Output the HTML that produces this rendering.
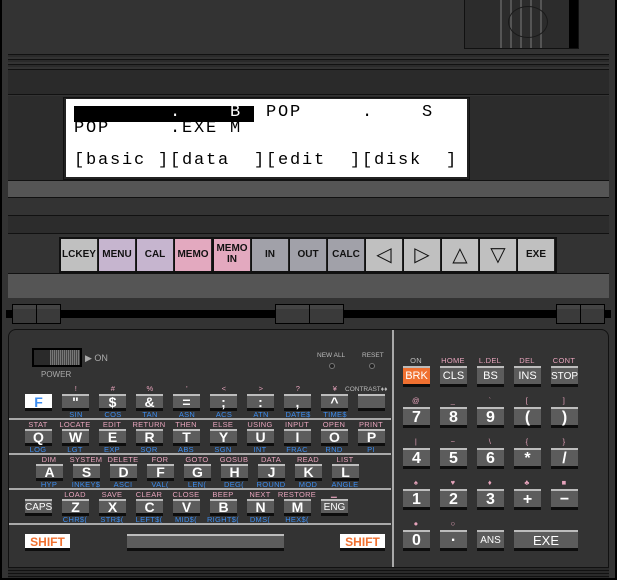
<!DOCTYPE html>
<html><head><meta charset="utf-8"><style>
*{margin:0;padding:0;box-sizing:border-box}
body{width:617px;height:580px;background:#fff;position:relative;overflow:hidden;font-family:"Liberation Sans",sans-serif}
.a{position:absolute}
.lid{left:0;top:0;width:617px;height:300px;background:#333;border:2px solid #000;border-top:none}
.base{left:0;top:298px;width:617px;height:282px;background:#333;border:2px solid #000;border-top:none;border-radius:0 0 0 0}
.in{left:8px;top:329px;width:601px;height:240px;background:#333;border:1px solid #111;border-radius:8px 8px 0 0}
.k{position:absolute;height:17px;width:27px;background:#5c5c5c;border-top:2px solid #bdbdbd;border-bottom:3px solid #0d0d0d;color:#fff;font-weight:bold;font-size:14px;line-height:13px;text-align:center}
.r .k{height:21px;font-size:16px;line-height:17px}
.p,.b{position:absolute;font-size:7.5px;width:40px;text-align:center;letter-spacing:.3px}
.p{color:#e6a3bb}.b{color:#3c8df0}
.sep{position:absolute;left:9px;width:382px;height:2px;background:#a9a9a9}
.fk{position:absolute;top:239px;height:32px;width:37px;font-size:10px;font-weight:bold;color:#111;text-align:center;line-height:32px;border-right:1px solid #222}
.lcd{font-family:"Liberation Mono",monospace;font-size:17px;letter-spacing:1.8px;position:absolute;left:74px;white-space:pre;color:#000;line-height:16px}
</style></head><body>
<div class="a lid"></div>
<!-- speaker -->
<div class="a" style="left:464px;top:0;width:115px;height:49px;background:#2c2c2c;border:1px solid #111;border-top:none"></div>
<div class="a" style="left:500px;top:0;width:2px;height:48px;background:#555"></div>
<div class="a" style="left:510px;top:0;width:2px;height:48px;background:#555"></div>
<div class="a" style="left:520px;top:0;width:2px;height:48px;background:#555"></div>
<div class="a" style="left:530px;top:0;width:2px;height:48px;background:#555"></div>
<div class="a" style="left:540px;top:0;width:2px;height:48px;background:#555"></div>
<div class="a" style="left:508px;top:6px;width:40px;height:32px;border:1px solid #1a1a1a;border-radius:50%"></div>
<div class="a" style="left:569px;top:0;width:9px;height:48px;background:#000"></div>
<!-- stripes -->
<div class="a" style="left:8px;top:52px;width:601px;height:19px;background:repeating-linear-gradient(#333 0 2px,#111 2px 3px,#2a2a2a 3px 5px)"></div>
<div class="a" style="left:8px;top:71px;width:601px;height:24px;background:#2a2a2a;border-bottom:1px solid #111"></div>
<div class="a" style="left:8px;top:96px;width:601px;height:84px;background:#2c2c2c"></div>
<div class="a" style="left:63px;top:97px;width:407px;height:83px;background:#222;border:1px solid #111"></div>
<div class="a" style="left:66px;top:99px;width:401px;height:78px;background:#fff"></div>
<div class="a" style="left:74px;top:106px;width:180px;height:16px;background:#000"></div>
<div class="lcd" style="top:105px;color:#fff">        .    B</div>
<div class="lcd" style="top:105px">                POP     .    S</div>
<div class="lcd" style="top:121px">POP     .EXE M</div>
<div class="lcd" style="top:153px">[basic ][data  ][edit  ][disk  ]</div>
<div class="a" style="left:8px;top:180px;width:601px;height:18px;background:#555;border-top:1px solid #111;border-bottom:1px solid #111"></div>
<div class="a" style="left:8px;top:198px;width:601px;height:18px;background:#333;border-bottom:1px solid #111"></div>
<div class="a" style="left:8px;top:216px;width:601px;height:18px;background:#2c2c2c;border-bottom:1px solid #111"></div>
<div class="a" style="left:8px;top:234px;width:601px;height:39px;background:#333"></div>
<div class="a" style="left:59px;top:237px;width:498px;height:36px;background:#111"></div>
<div class="fk" style="left:61px;background:#c0c0c0">LCKEY</div>
<div class="fk" style="left:99px;background:#c6b5cf">MENU</div>
<div class="fk" style="left:137px;background:#c6b5cf">CAL</div>
<div class="fk" style="left:175px;background:#e3a9bf">MEMO</div>
<div class="fk" style="left:214px;background:#e3a9bf;line-height:11px;padding-top:4px">MEMO<br>IN</div>
<div class="fk" style="left:252px;background:#a1a1a9">IN</div>
<div class="fk" style="left:290px;background:#a1a1a9">OUT</div>
<div class="fk" style="left:328px;background:#a1a1a9">CALC</div>
<div class="fk" style="left:366px;background:#c0c0c0;font-size:20px;font-weight:normal">◁</div>
<div class="fk" style="left:404px;background:#c0c0c0;font-size:20px;font-weight:normal">▷</div>
<div class="fk" style="left:442px;background:#c0c0c0;font-size:20px;font-weight:normal">△</div>
<div class="fk" style="left:480px;background:#c0c0c0;font-size:20px;font-weight:normal">▽</div>
<div class="fk" style="left:518px;background:#c0c0c0">EXE</div>
<div class="a" style="left:8px;top:273px;width:601px;height:26px;background:#555;border-top:1px solid #111;border-bottom:1px solid #111"></div>
<!-- base -->
<div class="a base"></div>
<div class="a" style="left:6px;top:310px;width:605px;height:8px;background:#000"></div>
<div class="a" style="left:12px;top:304px;width:49px;height:20px;background:#3a3a3a;border:1px solid #000;box-shadow:inset 0 4px #444"></div>
<div class="a" style="left:36px;top:304px;width:1px;height:20px;background:#000"></div>
<div class="a" style="left:275px;top:304px;width:69px;height:20px;background:#3a3a3a;border:1px solid #000;box-shadow:inset 0 4px #444"></div>
<div class="a" style="left:309px;top:304px;width:1px;height:20px;background:#000"></div>
<div class="a" style="left:556px;top:304px;width:49px;height:20px;background:#3a3a3a;border:1px solid #000;box-shadow:inset 0 4px #444"></div>
<div class="a" style="left:580px;top:304px;width:1px;height:20px;background:#000"></div>
<div class="a in"></div>
<div class="a" style="left:392px;top:330px;width:2px;height:238px;background:#a9a9a9"></div>
<div class="a" style="left:8px;top:567px;width:601px;height:11px;background:repeating-linear-gradient(#111 0 1px,#2a2a2a 1px 3px)"></div>
<!-- power -->
<div class="a" style="left:32px;top:348px;width:50px;height:19px;background:#2a2a2a;border:2px solid #000"></div>
<div class="a" style="left:50px;top:350px;width:30px;height:15px;background:repeating-linear-gradient(90deg,#777 0 1px,#444 1px 2px)"></div>
<div class="a" style="left:85px;top:353px;font-size:9px;color:#aaa">▶ ON</div>
<div class="a" style="left:41px;top:370px;font-size:8px;color:#aaa">POWER</div>
<div class="a" style="left:317px;top:352px;font-size:6.5px;color:#bbb">NEW ALL</div>
<div class="a" style="left:362px;top:352px;font-size:6.5px;color:#bbb">RESET</div>
<div class="a" style="left:329px;top:363px;width:6px;height:6px;border-radius:50%;background:#222;border:1px solid #777"></div>
<div class="a" style="left:369px;top:363px;width:6px;height:6px;border-radius:50%;background:#222;border:1px solid #777"></div>
<div class="a" style="left:345px;top:386px;font-size:6.5px;color:#bbb">CONTRAST♦♦</div>
<!-- row1 -->
<div class="k" style="left:25px;top:394px;background:#fff;color:#3c8df0;border-top-color:#fff">F</div>
<div class="k" style="left:62px;top:394px">"</div><div class="k" style="left:99px;top:394px">$</div><div class="k" style="left:136px;top:394px">&amp;</div><div class="k" style="left:173px;top:394px">=</div><div class="k" style="left:210px;top:394px">;</div><div class="k" style="left:247px;top:394px">:</div><div class="k" style="left:284px;top:394px">,</div><div class="k" style="left:321px;top:394px">^</div><div class="k" style="left:358px;top:394px"></div>
<div class="p" style="left:56px;top:384px">!</div><div class="p" style="left:93px;top:384px">#</div><div class="p" style="left:130px;top:384px">%</div><div class="p" style="left:167px;top:384px">'</div><div class="p" style="left:204px;top:384px">&lt;</div><div class="p" style="left:241px;top:384px">&gt;</div><div class="p" style="left:278px;top:384px">?</div><div class="p" style="left:315px;top:384px">¥</div>
<div class="b" style="left:56px;top:410px">SIN</div><div class="b" style="left:93px;top:410px">COS</div><div class="b" style="left:130px;top:410px">TAN</div><div class="b" style="left:167px;top:410px">ASN</div><div class="b" style="left:204px;top:410px">ACS</div><div class="b" style="left:241px;top:410px">ATN</div><div class="b" style="left:278px;top:410px">DATE$</div><div class="b" style="left:315px;top:410px">TIME$</div>
<div class="sep" style="top:418px"></div>
<!-- row2 -->
<div class="k" style="left:25px;top:429px">Q</div><div class="k" style="left:62px;top:429px">W</div><div class="k" style="left:99px;top:429px">E</div><div class="k" style="left:136px;top:429px">R</div><div class="k" style="left:173px;top:429px">T</div><div class="k" style="left:210px;top:429px">Y</div><div class="k" style="left:247px;top:429px">U</div><div class="k" style="left:284px;top:429px">I</div><div class="k" style="left:321px;top:429px">O</div><div class="k" style="left:358px;top:429px">P</div>
<div class="p" style="left:18px;top:420px">STAT</div><div class="p" style="left:55px;top:420px">LOCATE</div><div class="p" style="left:92px;top:420px">EDIT</div><div class="p" style="left:129px;top:420px">RETURN</div><div class="p" style="left:166px;top:420px">THEN</div><div class="p" style="left:203px;top:420px">ELSE</div><div class="p" style="left:240px;top:420px">USING</div><div class="p" style="left:277px;top:420px">INPUT</div><div class="p" style="left:314px;top:420px">OPEN</div><div class="p" style="left:351px;top:420px">PRINT</div>
<div class="b" style="left:18px;top:445px">LOG</div><div class="b" style="left:55px;top:445px">LGT</div><div class="b" style="left:92px;top:445px">EXP</div><div class="b" style="left:129px;top:445px">SQR</div><div class="b" style="left:166px;top:445px">ABS</div><div class="b" style="left:203px;top:445px">SGN</div><div class="b" style="left:240px;top:445px">INT</div><div class="b" style="left:277px;top:445px">FRAC</div><div class="b" style="left:314px;top:445px">RND</div><div class="b" style="left:351px;top:445px">PI</div>
<div class="sep" style="top:453px"></div>
<!-- row3 -->
<div class="k" style="left:36px;top:464px">A</div><div class="k" style="left:73px;top:464px">S</div><div class="k" style="left:110px;top:464px">D</div><div class="k" style="left:147px;top:464px">F</div><div class="k" style="left:184px;top:464px">G</div><div class="k" style="left:221px;top:464px">H</div><div class="k" style="left:258px;top:464px">J</div><div class="k" style="left:295px;top:464px">K</div><div class="k" style="left:332px;top:464px">L</div>
<div class="p" style="left:29px;top:455px">DIM</div><div class="p" style="left:66px;top:455px">SYSTEM</div><div class="p" style="left:103px;top:455px">DELETE</div><div class="p" style="left:140px;top:455px">FOR</div><div class="p" style="left:177px;top:455px">GOTO</div><div class="p" style="left:214px;top:455px">GOSUB</div><div class="p" style="left:251px;top:455px">DATA</div><div class="p" style="left:288px;top:455px">READ</div><div class="p" style="left:325px;top:455px">LIST</div>
<div class="b" style="left:29px;top:480px">HYP</div><div class="b" style="left:66px;top:480px">INKEY$</div><div class="b" style="left:103px;top:480px">ASCI</div><div class="b" style="left:140px;top:480px">VAL(</div><div class="b" style="left:177px;top:480px">LEN(</div><div class="b" style="left:214px;top:480px">DEG(</div><div class="b" style="left:251px;top:480px">ROUND</div><div class="b" style="left:288px;top:480px">MOD</div><div class="b" style="left:325px;top:480px">ANGLE</div>
<div class="sep" style="top:488px"></div>
<!-- row4 -->
<div class="k" style="left:25px;top:499px;font-size:10px;font-weight:normal">CAPS</div><div class="k" style="left:62px;top:499px">Z</div><div class="k" style="left:99px;top:499px">X</div><div class="k" style="left:136px;top:499px">C</div><div class="k" style="left:173px;top:499px">V</div><div class="k" style="left:210px;top:499px">B</div><div class="k" style="left:247px;top:499px">N</div><div class="k" style="left:284px;top:499px">M</div><div class="k" style="left:321px;top:499px;font-size:10px;font-weight:normal">ENG</div>
<div class="p" style="left:55px;top:490px">LOAD</div><div class="p" style="left:92px;top:490px">SAVE</div><div class="p" style="left:129px;top:490px">CLEAR</div><div class="p" style="left:166px;top:490px">CLOSE</div><div class="p" style="left:203px;top:490px">BEEP</div><div class="p" style="left:240px;top:490px">NEXT</div><div class="p" style="left:277px;top:490px">RESTORE</div><div class="p" style="left:314px;top:489px">▁</div>
<div class="b" style="left:55px;top:515px">CHR$(</div><div class="b" style="left:92px;top:515px">STR$(</div><div class="b" style="left:129px;top:515px">LEFT$(</div><div class="b" style="left:166px;top:515px">MID$(</div><div class="b" style="left:203px;top:515px">RIGHT$(</div><div class="b" style="left:240px;top:515px">DMS(</div><div class="b" style="left:277px;top:515px">HEX$(</div>
<div class="sep" style="top:523px"></div>
<!-- row5 -->
<div class="k" style="left:25px;top:534px;width:45px;background:#fff;color:#f07030;border-top-color:#fff;font-size:12px">SHIFT</div>
<div class="k" style="left:127px;top:534px;width:157px"></div>
<div class="k" style="left:340px;top:534px;width:45px;background:#fff;color:#f07030;border-top-color:#fff;font-size:12px">SHIFT</div>
<!-- right keypad -->
<div class="r">
<div class="p" style="left:396px;top:356px;color:#bbb">ON</div><div class="p" style="left:433px;top:356px">HOME</div><div class="p" style="left:470px;top:356px">L.DEL</div><div class="p" style="left:507px;top:356px">DEL</div><div class="p" style="left:544px;top:356px">CONT</div>
<div class="k" style="left:403px;top:366px;background:#f07030;border-top-color:#bbb;font-size:11px;font-weight:normal">BRK</div><div class="k" style="left:440px;top:366px;font-size:11px;font-weight:normal">CLS</div><div class="k" style="left:477px;top:366px;font-size:11px;font-weight:normal">BS</div><div class="k" style="left:514px;top:366px;font-size:11px;font-weight:normal">INS</div><div class="k" style="left:551px;top:366px;font-size:10px;font-weight:normal">STOP</div>
<div class="p" style="left:396px;top:396px">@</div><div class="p" style="left:433px;top:396px">_</div><div class="p" style="left:470px;top:396px">`</div><div class="p" style="left:507px;top:396px">[</div><div class="p" style="left:544px;top:396px">]</div>
<div class="k" style="left:403px;top:407px">7</div><div class="k" style="left:440px;top:407px">8</div><div class="k" style="left:477px;top:407px">9</div><div class="k" style="left:514px;top:407px">(</div><div class="k" style="left:551px;top:407px">)</div>
<div class="p" style="left:396px;top:437px">|</div><div class="p" style="left:433px;top:437px">~</div><div class="p" style="left:470px;top:437px">\</div><div class="p" style="left:507px;top:437px">{</div><div class="p" style="left:544px;top:437px">}</div>
<div class="k" style="left:403px;top:448px">4</div><div class="k" style="left:440px;top:448px">5</div><div class="k" style="left:477px;top:448px">6</div><div class="k" style="left:514px;top:448px">*</div><div class="k" style="left:551px;top:448px">/</div>
<div class="p" style="left:396px;top:478px">♠</div><div class="p" style="left:433px;top:478px">♥</div><div class="p" style="left:470px;top:478px">♦</div><div class="p" style="left:507px;top:478px">♣</div><div class="p" style="left:544px;top:478px">■</div>
<div class="k" style="left:403px;top:489px">1</div><div class="k" style="left:440px;top:489px">2</div><div class="k" style="left:477px;top:489px">3</div><div class="k" style="left:514px;top:489px">+</div><div class="k" style="left:551px;top:489px">−</div>
<div class="p" style="left:396px;top:519px">●</div><div class="p" style="left:433px;top:519px">○</div>
<div class="k" style="left:403px;top:530px">0</div><div class="k" style="left:440px;top:530px">·</div><div class="k" style="left:477px;top:530px;font-size:10px;font-weight:normal">ANS</div><div class="k" style="left:514px;top:530px;width:64px;font-size:13px;font-weight:normal">EXE</div>
</div>
</body></html>
